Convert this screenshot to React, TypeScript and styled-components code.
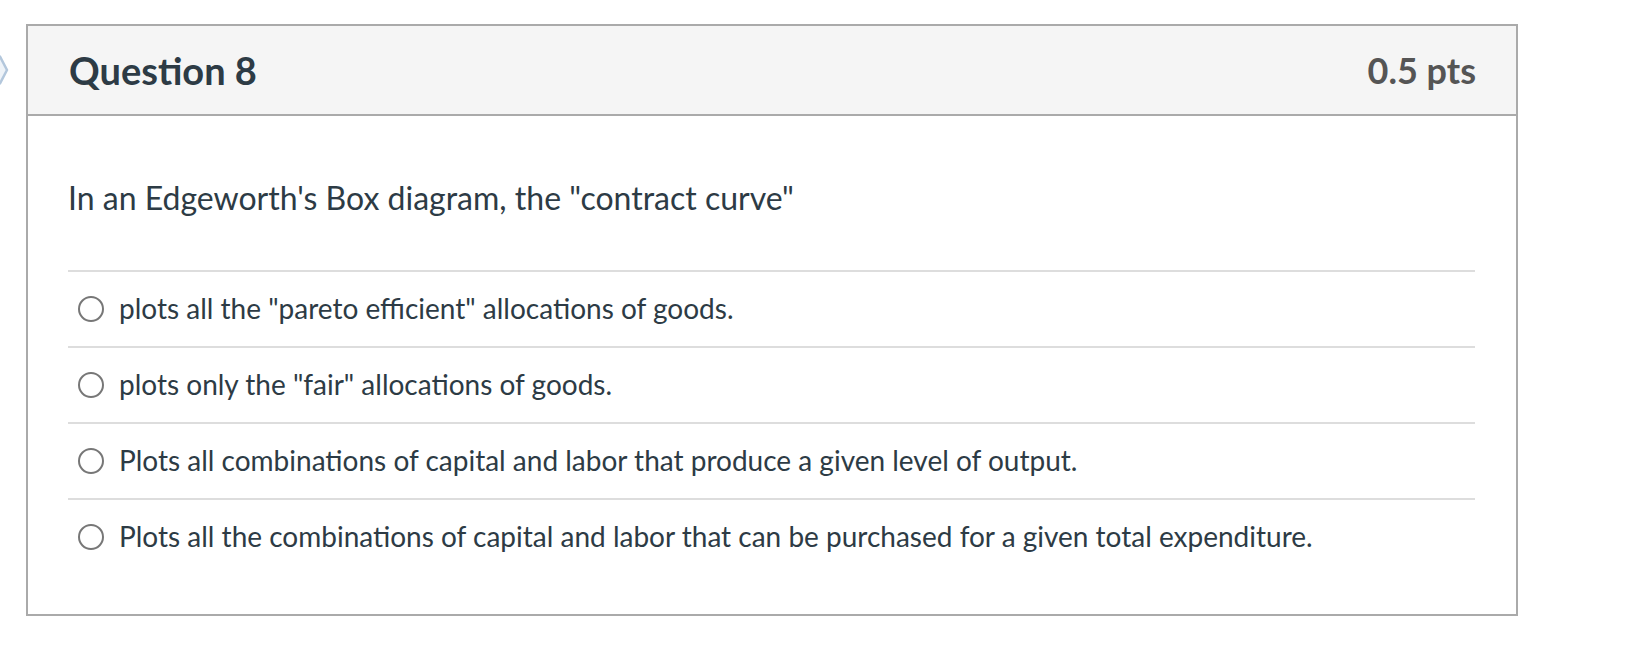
import React from 'react';
import styled, { createGlobalStyle } from 'styled-components';

const GlobalStyle = createGlobalStyle`
  html, body {
    margin: 0;
    padding: 0;
    background: #ffffff;
    font-family: Lato, "Open Sans", sans-serif;
    color: #2d3b45;
  }
`;

const answers = [
  'plots all the "pareto efficient" allocations of goods.',
  'plots only the "fair" allocations of goods.',
  'Plots all combinations of capital and labor that produce a given level of output.',
  'Plots all the combinations of capital and labor that can be purchased for a given total expenditure.',
];

const App = (): JSX.Element => {
  return (
    <>
      <GlobalStyle />
      <Page>
        <FlagColumn>
          <FlagIcon width="12" height="30" viewBox="0 0 12 30">
            <path
              d="M0 1.5 L3 1.5 L10 15 L3 28.5 L0 28.5"
              fill="#eef3f8"
              stroke="#b3c7dc"
              strokeWidth="2.5"
              strokeLinejoin="round"
            />
          </FlagIcon>
        </FlagColumn>
        <QuestionCard>
          <Header>
            <QuestionName>Question 8</QuestionName>
            <Points>0.5 pts</Points>
          </Header>
          <Body>
            <QuestionText>
              In an Edgeworth's Box diagram, the "contract curve"
            </QuestionText>
            <AnswerList>
              {answers.map((answer) => (
                <AnswerRow key={answer}>
                  <Radio />
                  <AnswerText>{answer}</AnswerText>
                </AnswerRow>
              ))}
            </AnswerList>
          </Body>
        </QuestionCard>
      </Page>
    </>
  );
};

export default App;

const Page = styled.div`
  display: flex;
  align-items: flex-start;
  padding-top: 24px;
`;
const FlagColumn = styled.div`
  width: 26px;
  flex-shrink: 0;
  display: flex;
  padding-top: 31px;
`;
const FlagIcon = styled.svg`
  margin-left: -3px;
  display: block;
`;
const QuestionCard = styled.div`
  width: 1492px;
  box-sizing: border-box;
  border: 2px solid #aaaaaa;
  background: #ffffff;
`;
const Header = styled.div`
  display: flex;
  align-items: center;
  justify-content: space-between;
  height: 88px;
  padding: 0 40px 0 41px;
  background: #f5f5f5;
  border-bottom: 2px solid #aaaaaa;
`;
const QuestionName = styled.div`
  font-size: 38px;
  font-weight: 700;
  color: #2d3b45;
`;
const Points = styled.div`
  font-size: 36px;
  font-weight: 700;
  color: #555555;
`;
const Body = styled.div`
  padding: 58px 41px 40px 40px;
`;
const QuestionText = styled.div`
  font-size: 32px;
  line-height: 48px;
  margin-bottom: 48px;
`;
const AnswerList = styled.div`
  display: flex;
  flex-direction: column;
`;
const AnswerRow = styled.div`
  display: flex;
  align-items: center;
  height: 76px;
  box-sizing: border-box;
  border-top: 2px solid #dddddd;
  padding-left: 10px;
  padding-bottom: 3px;
`;
const Radio = styled.span`
  width: 26px;
  height: 26px;
  box-sizing: border-box;
  border: 2px solid #777777;
  border-radius: 50%;
  flex-shrink: 0;
  margin-right: 15px;
  margin-top: 3px;
`;
const AnswerText = styled.span`
  font-size: 28px;
  color: #2d3b45;
`;
